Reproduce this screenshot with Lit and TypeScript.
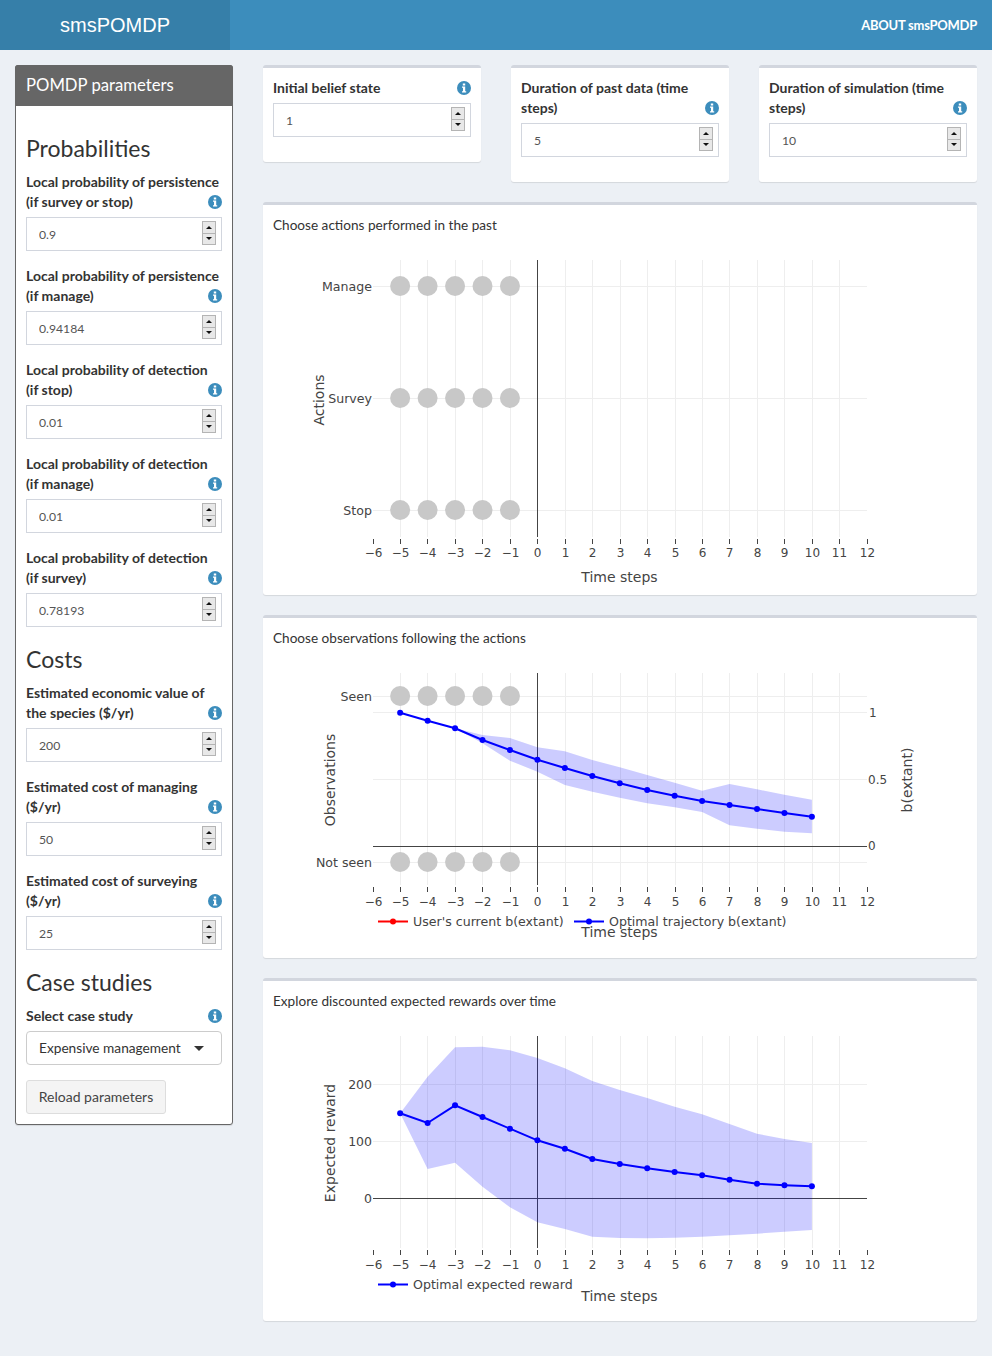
import { LitElement, html, svg, css } from 'lit';
import { customElement } from 'lit/decorators.js';

const infoIcon = html`<svg class="info" width="14" height="14" viewBox="0 0 14 14">
  <circle cx="7" cy="7" r="7" fill="#3c8dbc"></circle>
  <path fill="#fff" d="M5.8 2.5h2.4v2H5.8zM5 5.5h3.2v4.7h1v1.3H5v-1.3h1V6.8H5z"></path>
</svg>`;

const steps = [-5, -4, -3, -2, -1, 0, 1, 2, 3, 4, 5, 6, 7, 8, 9, 10];
const ticks = [-6, ...steps, 11, 12];
const past = [-5, -4, -3, -2, -1];

// plot coordinates are page pixels, the viewBox of each chart shifts them into place
const px = (t: number) => 537.4 + 27.45 * t;
const gx = (t: number) => Math.round(537.3 + 27.45 * t) + 0.5;

const BLUE = '#0000ff';

const points = (xs: number[], ys: number[]) => xs.map((t, i) => `${px(t)},${ys[i]}`).join(' ');

function band(upper: number[], lower: number[]) {
  const top = steps.map((t, i) => `${px(t)},${upper[i]}`);
  const bottom = steps.map((t, i) => `${px(t)},${lower[i]}`).reverse();
  return svg`<polygon points=${[...top, ...bottom].join(' ')} fill="#0000ff" fill-opacity="0.2"></polygon>`;
}

function line(ys: number[]) {
  return svg`
    <polyline points=${points(steps, ys)} fill="none" stroke=${BLUE} stroke-width="2"></polyline>
    ${steps.map((t, i) => svg`<circle cx=${px(t)} cy=${ys[i]} r="3" fill=${BLUE}></circle>`)}`;
}

function xAxis(top: number, bottom: number, labelY: number, titleY: number) {
  return svg`
    ${ticks.slice(1, -1).map(
      (t) => svg`<line x1=${gx(t)} x2=${gx(t)} y1=${top} y2=${bottom} stroke="#eee"></line>`,
    )}
    ${ticks.map(
      (t) => svg`<line x1=${gx(t)} x2=${gx(t)} y1=${bottom + 2} y2=${bottom + 7} stroke="#444"></line>
        <text x=${gx(t)} y=${labelY} text-anchor="middle" class="tick">${t < 0 ? `\u2212${-t}` : t}</text>`,
    )}
    <text x="619.5" y=${titleY} text-anchor="middle" class="title">Time steps</text>`;
}

function hGrid(y: number, color = '#eee') {
  return svg`<line x1="373" x2="867" y1=${y + 0.5} y2=${y + 0.5} stroke=${color}></line>`;
}

function rowLabel(y: number, text: string, cls = 'row') {
  return svg`<text x="372" y=${y + 4.5} text-anchor="end" class=${cls}>${text}</text>`;
}

function dots(y: number) {
  return past.map((t) => svg`<circle cx=${px(t)} cy=${y} r="10" fill="#c8c8c8"></circle>`);
}

function axisTitle(x: number, y: number, text: string) {
  return svg`<text transform="translate(${x} ${y}) rotate(-90)" text-anchor="middle" class="title">${text}</text>`;
}

function legendItem(x: number, y: number, color: string, text: string) {
  return svg`
    <line x1=${x} x2=${x + 30} y1=${y} y2=${y} stroke=${color} stroke-width="2"></line>
    <circle cx=${x + 15} cy=${y} r="3" fill=${color}></circle>
    <text x=${x + 35} y=${y + 4.5} class="legend">${text}</text>`;
}

const actionsChart = svg`
  ${xAxis(260, 537, 557, 582)}
  ${[286, 398, 510].map((y) => hGrid(y))}
  <line x1=${gx(0)} x2=${gx(0)} y1="260" y2="537" stroke="#444"></line>
  ${rowLabel(286, 'Manage')}${rowLabel(398, 'Survey')}${rowLabel(510, 'Stop')}
  ${[286, 398, 510].map(dots)}
  ${axisTitle(324, 400, 'Actions')}`;

const beliefMean = [712.7, 720.7, 728.3, 740, 750, 759.7, 768, 776, 783.3, 790, 795.7, 801, 805, 809, 813, 816.7];
const beliefUpper = [712.7, 720.7, 728.3, 735, 738, 747.3, 751.3, 760, 767.3, 775, 782.7, 790.7, 784, 789.3, 794.7, 799.7];
const beliefLower = [712.7, 720.7, 728.3, 743.3, 760.7, 771.7, 785, 791.7, 797.7, 803.3, 807.3, 812, 825.3, 828.7, 831.7, 833.3];

const observationsChart = svg`
  ${xAxis(673, 885, 906, 937)}
  ${[696, 712, 779, 862].map((y) => hGrid(y))}
  ${hGrid(846, '#444')}
  <line x1=${gx(0)} x2=${gx(0)} y1="673" y2="885" stroke="#444"></line>
  ${band(beliefUpper, beliefLower)}
  ${line(beliefMean)}
  ${rowLabel(696, 'Seen')}${rowLabel(862, 'Not seen')}
  ${[696, 862].map(dots)}
  <text x="869" y="716.5" class="tick">1</text>
  <text x="868" y="783.5" class="tick">0.5</text>
  <text x="868" y="850" class="tick">0</text>
  ${axisTitle(335, 780, 'Observations')}
  ${axisTitle(912, 780, 'b(extant)')}
  ${legendItem(378, 921.5, '#ff0000', "User's current b(extant)")}
  ${legendItem(574, 921.5, BLUE, 'Optimal trajectory b(extant)')}`;

const rewardMean = [1113.3, 1123, 1105.3, 1117, 1128.7, 1140.3, 1148.7, 1159, 1164, 1168.3, 1172, 1175.3, 1179.7, 1183.7, 1185.3, 1186.3];
const rewardUpper = [1113.3, 1076.7, 1047.3, 1046.7, 1050.3, 1058, 1068.3, 1081, 1090, 1098, 1106.7, 1114.3, 1124, 1133.7, 1139, 1143];
const rewardLower = [1113.3, 1169, 1162.7, 1186.7, 1207.3, 1222.3, 1229, 1236.7, 1238, 1238.3, 1237.7, 1236.7, 1235.3, 1233.7, 1231.7, 1230];

const rewardChart = svg`
  ${xAxis(1036, 1248, 1269, 1301)}
  ${[1084, 1141].map((y) => hGrid(y))}
  ${hGrid(1198, '#444')}
  <line x1=${gx(0)} x2=${gx(0)} y1="1036" y2="1248" stroke="#444"></line>
  ${band(rewardUpper, rewardLower)}
  ${line(rewardMean)}
  ${rowLabel(1084, '200', 'num')}${rowLabel(1141, '100', 'num')}${rowLabel(1198, '0', 'num')}
  ${axisTitle(335, 1143, 'Expected reward')}
  ${legendItem(378, 1284.5, BLUE, 'Optimal expected reward')}`;

const sections = [
  {
    title: 'Probabilities',
    fields: [
      ['Local probability of persistence (if survey or stop)', '0.9'],
      ['Local probability of persistence (if manage)', '0.94184'],
      ['Local probability of detection (if stop)', '0.01'],
      ['Local probability of detection (if manage)', '0.01'],
      ['Local probability of detection (if survey)', '0.78193'],
    ],
  },
  {
    title: 'Costs',
    fields: [
      ['Estimated economic value of the species ($/yr)', '200'],
      ['Estimated cost of managing ($/yr)', '50'],
      ['Estimated cost of surveying ($/yr)', '25'],
    ],
  },
];

const topFields = [
  ['Initial belief state', '1'],
  ['Duration of past data (time steps)', '5'],
  ['Duration of simulation (time steps)', '10'],
];

@customElement('app-root')
export class AppRoot extends LitElement {
  static styles = css`
    :host {
      display: block;
      min-height: 100vh;
      background: #ecf0f5;
      color: #333;
      font-family: 'Lato', sans-serif;
      font-size: 14px;
      line-height: 20px;
    }
    .navbar {
      display: flex;
      height: 50px;
      background: #3c8dbc;
      color: #fff;
    }
    .logo {
      width: 230px;
      background: #367fa9;
      font-family: 'Liberation Sans', sans-serif;
      font-size: 20px;
      line-height: 50px;
      text-align: center;
    }
    .about {
      margin-left: auto;
      padding-right: 15px;
      font-size: 13px;
      font-weight: 700;
      letter-spacing: -0.25px;
      line-height: 50px;
    }
    .content {
      display: flex;
      gap: 30px;
      align-items: flex-start;
      padding: 15px 15px 35px;
    }
    .sidebar {
      flex: 0 0 218px;
      box-sizing: border-box;
      background: #fff;
      border: 1px solid #666;
      border-radius: 3px;
      box-shadow: 0 1px 1px rgba(0, 0, 0, 0.1);
    }
    .sidebar-head {
      margin: -1px -1px 0;
      height: 41px;
      padding-left: 11px;
      background: #666;
      border-radius: 3px 3px 0 0;
      color: #fff;
      font-size: 16.7px;
      line-height: 40px;
    }
    .sidebar-body {
      padding: 10px;
    }
    h3 {
      margin: 19px 0 11px;
      font-size: 23px;
      font-weight: 400;
      line-height: 26px;
    }
    .field {
      margin-bottom: 15px;
    }
    .field-label {
      position: relative;
      margin-bottom: 5px;
      font-weight: 700;
      font-size: 14px;
    }
    .info {
      position: absolute;
      right: 0;
      bottom: 3px;
    }
    .number {
      display: flex;
      align-items: center;
      box-sizing: border-box;
      height: 34px;
      padding: 0 5px 0 12px;
      border: 1px solid #d2d6de;
      background: #fff;
    }
    input {
      flex: 1;
      min-width: 0;
      padding: 0;
      border: 0;
      background: transparent;
      color: #555;
      font-family: inherit;
      font-size: 12.2px;
      outline: none;
      appearance: textfield;
    }
    input::-webkit-inner-spin-button {
      appearance: none;
    }
    .spin {
      display: flex;
      flex-direction: column;
      box-sizing: border-box;
      width: 14px;
      height: 24px;
      margin-bottom: 2px;
      border: 1px solid #b4b4b4;
      background: #e8e8e8;
    }
    .spin span {
      display: flex;
      flex: 1;
      align-items: center;
      justify-content: center;
    }
    .spin span:first-child {
      border-bottom: 1px solid #b4b4b4;
    }
    .up,
    .down {
      width: 0;
      height: 0;
      border: 3.5px solid transparent;
    }
    .up {
      border-bottom-color: #111;
      border-top-width: 0;
    }
    .down {
      border-top-color: #111;
      border-bottom-width: 0;
    }
    .select {
      display: flex;
      align-items: center;
      justify-content: space-between;
      box-sizing: border-box;
      height: 34px;
      padding: 0 17px 0 12px;
      border: 1px solid #ccc;
      border-radius: 4px;
      font-size: 13.7px;
    }
    .caret {
      width: 0;
      height: 0;
      border: 5px solid transparent;
      border-top-color: #333;
      border-bottom-width: 0;
    }
    button {
      display: block;
      height: 34px;
      width: 140px;
      padding: 0 0 2px;
      border: 1px solid #ddd;
      border-radius: 3px;
      background: #f4f4f4;
      color: #444;
      font-family: inherit;
      font-size: 14px;
    }
    .main {
      flex: 1;
      min-width: 0;
    }
    .top-row {
      display: grid;
      grid-template-columns: repeat(3, 1fr);
      gap: 30px;
      align-items: start;
      margin-bottom: 20px;
    }
    .box {
      background: #fff;
      border-top: 3px solid #d2d6de;
      border-radius: 3px;
      box-shadow: 0 1px 1px rgba(0, 0, 0, 0.1);
      padding: 10px;
    }
    .chart-box {
      margin-bottom: 20px;
    }
    .chart-box:last-child {
      margin-bottom: 0;
    }
    .chart-title {
      font-size: 13.6px;
      height: 20px;
    }
    svg.plot {
      display: block;
    }
    .tick {
      font: 12px 'DejaVu Sans', sans-serif;
      fill: #444;
    }
    .num {
      font: 12.5px 'DejaVu Sans', sans-serif;
      fill: #444;
    }
    .row {
      font: 12.6px 'DejaVu Sans', sans-serif;
      fill: #444;
    }
    .legend {
      font: 12.6px 'DejaVu Sans', sans-serif;
      fill: #444;
    }
    .title {
      font: 14px 'DejaVu Sans', sans-serif;
      fill: #444;
    }
  `;

  renderField(label: string, value: string) {
    return html`<div class="field">
      <div class="field-label">${label}${infoIcon}</div>
      <div class="number">
        <input type="number" .value=${value} />
        <div class="spin">
          <span><i class="up"></i></span>
          <span><i class="down"></i></span>
        </div>
      </div>
    </div>`;
  }

  renderChart(title: string, top: number, height: number, body: unknown) {
    return html`<div class="box chart-box">
      <div class="chart-title">${title}</div>
      <svg class="plot" width="694" height=${height} viewBox="273 ${top} 694 ${height}">${body}</svg>
    </div>`;
  }

  render() {
    return html`
      <div class="navbar">
        <div class="logo">smsPOMDP</div>
        <div class="about">ABOUT smsPOMDP</div>
      </div>
      <div class="content">
        <aside class="sidebar">
          <div class="sidebar-head">POMDP parameters</div>
          <div class="sidebar-body">
            ${sections.map(
              (s) => html`<h3>${s.title}</h3>
                ${s.fields.map(([label, value]) => this.renderField(label, value))}`,
            )}
            <h3>Case studies</h3>
            <div class="field">
              <div class="field-label">Select case study${infoIcon}</div>
              <div class="select">Expensive management<span class="caret"></span></div>
            </div>
            <button>Reload parameters</button>
          </div>
        </aside>
        <main class="main">
          <div class="top-row">
            ${topFields.map(([label, value]) => html`<div class="box">${this.renderField(label, value)}</div>`)}
          </div>
          ${this.renderChart('Choose actions performed in the past', 235, 350, actionsChart)}
          ${this.renderChart('Choose observations following the actions', 648, 300, observationsChart)}
          ${this.renderChart('Explore discounted expected rewards over time', 1011, 300, rewardChart)}
        </main>
      </div>
    `;
  }
}
